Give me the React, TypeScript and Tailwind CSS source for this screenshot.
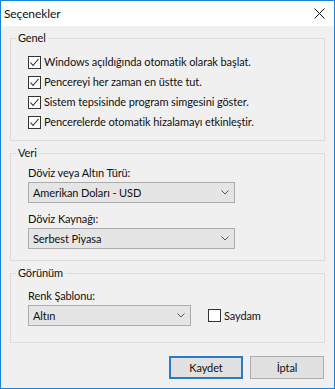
import type { ReactNode } from "react"

const font = { fontFamily: 'Lato, "Liberation Sans", sans-serif' }

function Check({ checked }: { checked: boolean }) {
  return (
    <span className="w-[13px] h-[13px] border border-[#333333] bg-white flex items-center justify-center shrink-0">
      {checked && (
        <svg width="11" height="11" viewBox="0 0 11 11">
          <polyline points="1.5,5.5 4,8.5 9.5,2" fill="none" stroke="#222" strokeWidth="1.1" />
        </svg>
      )}
    </span>
  )
}

function Row({ label }: { label: string }) {
  return (
    <div className="h-[20px] flex items-center gap-[3px]">
      <Check checked />
      <span>{label}</span>
    </div>
  )
}

function Combo({ value, width }: { value: string; width: string }) {
  return (
    <div className={`${width} h-[21px] bg-[#e5e5e5] border border-[#acacac] flex items-center justify-between pl-[4px] pr-[5px]`}>
      <span>{value}</span>
      <svg width="8" height="5" viewBox="0 0 8 5">
        <polyline points="0.5,0.5 4,4 7.5,0.5" fill="none" stroke="#555" strokeWidth="1" />
      </svg>
    </div>
  )
}

function Group({ title, className, children }: { title: string; className: string; children: ReactNode }) {
  return (
    <fieldset className="mx-[9px] border border-[#dcdcdc] mt-[4px]">
      <legend className="ml-[5px] px-[2px] leading-[16px]">{title}</legend>
      <div className={`pl-[17px] ${className}`}>{children}</div>
    </fieldset>
  )
}

export default function App() {
  return (
    <div style={font} className="w-[335px] h-[389px] border border-[#1883d7] bg-[#f0f0f0] flex flex-col text-[11px] tracking-[-0.1px] text-[#111] leading-[16px]">
      <div className="h-[25px] bg-white flex items-center justify-between pl-[3px] pr-[9px] text-[12px]">
        <span>Seçenekler</span>
        <svg width="11" height="11" viewBox="0 0 11 11">
          <path d="M0.5 0.5 L10.5 10.5 M10.5 0.5 L0.5 10.5" stroke="#111" strokeWidth="1" />
        </svg>
      </div>

      <Group title="Genel" className="pt-[6px] pb-[8px]">
        <Row label="Windows açıldığında otomatik olarak başlat." />
        <Row label="Pencereyi her zaman en üstte tut." />
        <Row label="Sistem tepsisinde program simgesini göster." />
        <Row label="Pencerelerde otomatik hizalamayı etkinleştir." />
      </Group>

      <Group title="Veri" className="pt-[4px] pb-[11px]">
        <div>Döviz veya Altın Türü:</div>
        <div className="mt-[1px]">
          <Combo value="Amerikan Doları - USD" width="w-[207px]" />
        </div>
        <div className="mt-[8px]">Döviz Kaynağı:</div>
        <div className="mt-[1px]">
          <Combo value="Serbest Piyasa" width="w-[207px]" />
        </div>
      </Group>

      <Group title="Görünüm" className="pt-[7px] pb-[16px]">
        <div>Renk Şablonu:</div>
        <div className="mt-[1px] flex items-center">
          <Combo value="Altın" width="w-[163px]" />
          <div className="ml-[17px] flex items-center gap-[3px]">
            <Check checked={false} />
            <span>Saydam</span>
          </div>
        </div>
      </Group>

      <div className="mt-[13px] mr-[10px] flex justify-end gap-[7px]">
        <button className="w-[74px] h-[23px] bg-[#e1e1e1] border-2 border-[#2b7bc0]">Kaydet</button>
        <button className="w-[74px] h-[23px] bg-[#e1e1e1] border border-[#adadad]">İptal</button>
      </div>
    </div>
  )
}
